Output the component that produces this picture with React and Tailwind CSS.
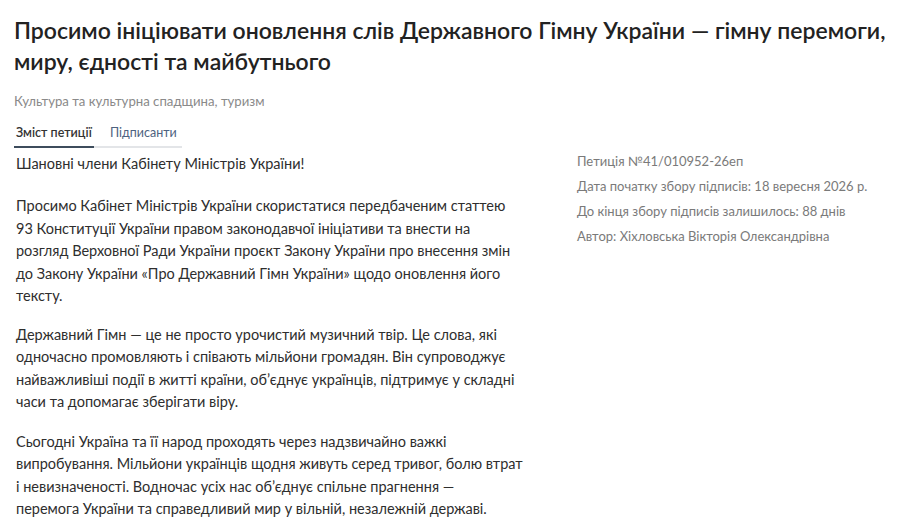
export default function App() {
  return (
    <div className="w-[920px] h-[520px] overflow-hidden bg-white text-[#2b2b2b]" style={{ fontFamily: "Lato, 'Noto Sans', sans-serif" }}>
      <div className="pl-[14px] pt-[15px]">
        <h1 className="text-[23px] leading-[31px] font-semibold text-[#222] w-[900px]">
          Просимо ініціювати оновлення слів Державного Гімну України — гімну перемоги, миру, єдності та майбутнього
        </h1>
        <div className="mt-[15px] text-[13.2px] text-[#8a8a8a]">Культура та культурна спадщина, туризм</div>
        <div className="mt-[12px] flex w-[168px] border-b-2 border-[#e3e5e8] text-[12.5px]">
          <div className="w-[80px] pl-[2px] pb-[3px] border-b-2 border-[#3d4c5c] -mb-[2px] text-[#333] font-semibold">Зміст петиції</div>
          <div className="pl-[16px] pb-[3px] text-[#4d6280]">Підписанти</div>
        </div>
        <div className="flex mt-[5px]">
          <div className="w-[548px] shrink-0 pl-[2px] text-[14.5px] leading-[22.5px] text-[#2e2e2e]">
            <p>Шановні члени Кабінету Міністрів України!</p>
            <p className="mt-[20px]">Просимо Кабінет Міністрів України скористатися передбаченим статтею<br />93 Конституції України правом законодавчої ініціативи та внести на<br />розгляд Верховної Ради України проєкт Закону України про внесення змін<br />до Закону України «Про Державний Гімн України» щодо оновлення його<br />тексту.</p>
            <p className="mt-[16px]">Державний Гімн — це не просто урочистий музичний твір. Це слова, які<br />одночасно промовляють і співають мільйони громадян. Він супроводжує<br />найважливіші події в житті країни, об’єднує українців, підтримує у складні<br />часи та допомагає зберігати віру.</p>
            <p className="mt-[17px]">Сьогодні Україна та її народ проходять через надзвичайно важкі<br />випробування. Мільйони українців щодня живуть серед тривог, болю втрат<br />і невизначеності. Водночас усіх нас об’єднує спільне прагнення —<br />перемога України та справедливий мир у вільній, незалежній державі.</p>
          </div>
          <div className="ml-[15px] -mt-[4px] text-[13px] leading-[25.3px] text-[#7a7a7a]">
            <div>Петиція №41/010952-26еп</div>
            <div>Дата початку збору підписів: 18 вересня 2026 р.</div>
            <div>До кінця збору підписів залишилось: 88 днів</div>
            <div>Автор: Хіхловська Вікторія Олександрівна</div>
          </div>
        </div>
      </div>
    </div>
  );
}
